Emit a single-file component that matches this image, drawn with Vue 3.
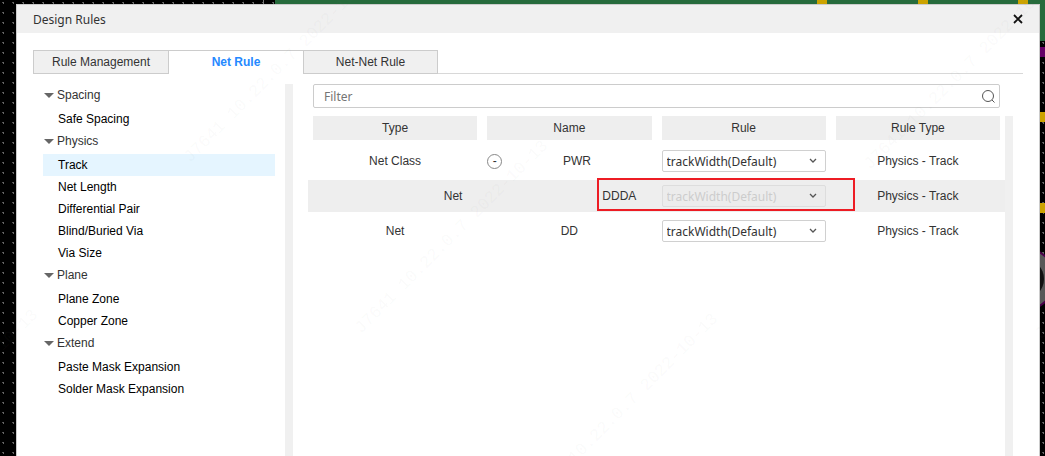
<script setup>
import { ref } from 'vue'

const tabs = ['Rule Management', 'Net Rule', 'Net-Net Rule']
const activeTab = ref('Net Rule')
const filter = ref('')
const selected = ref('Track')

const groups = [
  { name: 'Spacing', items: ['Safe Spacing'] },
  { name: 'Physics', items: ['Track', 'Net Length', 'Differential Pair', 'Blind/Buried Via', 'Via Size'] },
  { name: 'Plane', items: ['Plane Zone', 'Copper Zone'] },
  { name: 'Extend', items: ['Paste Mask Expansion', 'Solder Mask Expansion'] },
]

const columns = ['Type', 'Name', 'Rule', 'Rule Type']
const rows = [
  { type: 'Net Class', name: 'PWR', expandable: true },
  { type: 'Net', name: 'DDDA', nested: true },
  { type: 'Net', name: 'DD' },
]

const stamp = 'J7641 10.22.0.7 2022-10-13'
const stamps = [[190, 163], [361, 334], [531, 507], [870, 170], [1041, 340], [-149, 503]]
</script>

<template>
  <div class="screen">
    <svg class="board" aria-hidden="true">
      <defs>
        <pattern id="grid" width="10" height="10" patternUnits="userSpaceOnUse">
          <rect width="10" height="10" fill="#000" />
          <rect x="2" y="2" width="2" height="1" fill="#555" />
          <rect x="3" y="2" width="1" height="2" fill="#666" />
        </pattern>
      </defs>
      <rect width="100%" height="100%" fill="url(#grid)" />
      <rect x="263" width="1" height="4" fill="#777" />
      <rect x="275" width="100%" height="41" fill="#266b3c" />
      <svg x="100%" overflow="visible">
        <rect x="-228" width="10" height="4" fill="#cca300" />
        <rect x="-127" width="10" height="4" fill="#cca300" />
        <rect x="-27" width="10" height="4" fill="#cca300" />
        <rect x="-5" y="47" width="5" height="10" fill="#660066" />
        <rect x="-5" y="112" width="5" height="10" fill="#cca300" />
        <rect x="-5" y="203" width="5" height="10" fill="#cca300" />
        <circle cx="-21" cy="279" r="31" fill="#585858" stroke="#4a004a" stroke-width="2" />
        <circle cx="-21" cy="279" r="20" fill="#111" />
      </svg>
    </svg>

    <section class="dialog" role="dialog" aria-labelledby="title">
      <header class="titlebar">
        <h1 id="title">Design Rules</h1>
        <button class="close" type="button" aria-label="Close">
          <svg width="10" height="10" viewBox="0 0 10 10"><path d="M1 1l8 8M9 1L1 9" stroke="#111" stroke-width="1.8" fill="none" /></svg>
        </button>
      </header>

      <nav class="tabs" role="tablist">
        <button
          v-for="t in tabs" :key="t" type="button" role="tab" class="tab"
          :class="{ active: t === activeTab }" :aria-selected="t === activeTab"
          @click="activeTab = t"
        >{{ t }}</button>
        <span class="tabline"></span>
      </nav>

      <div class="body">
        <aside class="side">
          <div class="tree">
            <div v-for="g in groups" :key="g.name" class="group">
              <button type="button" class="group-name">
                <svg width="10" height="5" viewBox="0 0 10 5"><path d="M0 0h10L5 5z" fill="#666" /></svg>
                {{ g.name }}
              </button>
              <button
                v-for="i in g.items" :key="i" type="button" class="leaf"
                :class="{ selected: i === selected }" @click="selected = i"
              >{{ i }}</button>
            </div>
          </div>
          <div class="track"></div>
        </aside>

        <main class="main">
          <label class="filter">
            <input v-model="filter" type="text" placeholder="Filter" aria-label="Filter">
            <svg width="14" height="14" viewBox="0 0 14 14"><circle cx="7" cy="7" r="5.5" fill="none" stroke="#555" /><path d="M11 11l2.5 2.5" fill="none" stroke="#555" /></svg>
          </label>
          <div class="list">
            <div class="rules">
              <table>
                <thead>
                  <tr><th v-for="c in columns" :key="c" scope="col"><div>{{ c }}</div></th></tr>
                </thead>
                <tbody>
                  <tr v-for="r in rows" :key="r.name" :class="{ nested: r.nested }">
                    <td class="type">{{ r.type }}</td>
                    <td class="name">
                      <div class="name-line">
                        <button v-if="r.expandable" type="button" class="toggle" aria-label="Collapse">-</button>
                        <span>{{ r.name }}</span>
                      </div>
                      <div v-if="r.nested" class="marker"></div>
                    </td>
                    <td>
                      <div class="pick">
                        <select :disabled="r.nested" :aria-label="'Rule for ' + r.name">
                          <option>trackWidth(Default)</option>
                        </select>
                        <svg width="8" height="6" viewBox="0 0 8 6"><path d="M1 1l3 3 3-3" fill="none" stroke="#555" stroke-width="1.3" /></svg>
                      </div>
                    </td>
                    <td>Physics - Track</td>
                  </tr>
                </tbody>
              </table>
            </div>
            <div class="track"></div>
          </div>
        </main>
      </div>
    </section>

    <svg class="stamps" aria-hidden="true">
      <text v-for="(s, n) in stamps" :key="n" :transform="`translate(${s[0]} ${s[1]}) rotate(-45)`">{{ stamp }}</text>
    </svg>
  </div>
</template>

<style>
body { margin: 0; }
</style>

<style scoped>
.screen {
  position: relative;
  display: flex;
  height: 100vh;
  overflow: hidden;
  font: 12px/22px "Liberation Sans", Arial, sans-serif;
  color: #333;
}
.board, .stamps { position: absolute; inset: 0; width: 100%; height: 100%; }
.stamps { pointer-events: none; }
.stamps text {
  font: 17px "Liberation Mono", monospace;
  fill: #808080;
  fill-opacity: 0.05;
}
button { padding: 0; border: 0; background: none; font: inherit; color: inherit; }
.dialog {
  position: relative;
  flex: 1;
  display: flex;
  flex-direction: column;
  margin: 4px 5px 0 16px;
  border: 1px solid #ccc;
  border-bottom: 0;
  background: #fff;
}
.titlebar {
  display: flex;
  align-items: center;
  justify-content: space-between;
  height: 28px;
  padding: 0 16px;
  background: #f0f0f0;
}
h1 { margin: 0; padding-top: 2px; font: 12px/26px "Noto Sans", sans-serif; }
.close { display: flex; }
.tabs { display: flex; margin: 17px 16px 0; }
.tab {
  box-sizing: border-box;
  width: 135px;
  height: 24px;
  border: solid #ccc;
  border-width: 1px;
  background: #f0f0f0;
}
.tab:first-child { width: 136px; }
.tab.active {
  width: 134px;
  border-width: 1px 0;
  border-bottom-color: #fff;
  background: #fff;
  color: #2589ff;
  font-weight: bold;
}
.tabline { flex: 1; border-bottom: 1px solid #d8d8d8; }
.body { flex: 1; display: flex; margin: 10px 26px 0 16px; }
.side { display: flex; gap: 10px; width: 250px; padding-left: 10px; }
.tree { flex: 1; }
.track { width: 8px; background: #f0f0f0; }
.group-name {
  display: flex;
  align-items: center;
  gap: 3px;
  width: 100%;
  height: 22px;
  margin-bottom: 2px;
  padding-left: 1px;
}
.leaf { display: block; width: 100%; height: 22px; padding-left: 15px; text-align: left; color: #000; }
.leaf.selected { background: #e5f5ff; }
.main { flex: 1; display: flex; flex-direction: column; margin-left: 15px; }
.filter {
  display: flex;
  align-items: center;
  box-sizing: border-box;
  height: 24px;
  margin: 0 13px 0 5px;
  padding: 0 4px 0 10px;
  border: 1px solid #ccc;
  border-radius: 2px;
}
.filter input {
  flex: 1;
  padding: 2px 0 0;
  border: 0;
  outline: 0;
  background: none;
  font: 12px/20px "Noto Sans", sans-serif;
}
.filter input::placeholder { color: #757575; }
.list { flex: 1; display: flex; margin-top: 8px; }
.rules { flex: 1; }
table {
  width: 100%;
  table-layout: fixed;
  border-spacing: 0 3px;
  margin-top: -3px;
}
th { height: 26px; padding: 0 5px; font-weight: normal; vertical-align: top; }
th div { line-height: 24px; background: #eee; }
td { height: 32px; padding: 0 5px; text-align: center; }
.nested td { background: #eee; }
.nested .type { padding-left: 121px; }
.name { position: relative; }
.name-line { display: flex; align-items: center; }
.name-line span { flex: 1; }
.nested .name-line { padding-left: 100px; }
.toggle {
  box-sizing: border-box;
  width: 15px;
  height: 15px;
  border: 1px solid #888;
  border-radius: 50%;
  line-height: 13px;
}
.marker {
  position: absolute;
  z-index: 1;
  top: -2px;
  left: 66%;
  width: 148%;
  height: 33px;
  box-sizing: border-box;
  border: 2px solid #ed1c24;
  pointer-events: none;
}
.pick { display: grid; align-items: center; }
.pick > * { grid-area: 1 / 1; }
.pick svg { justify-self: end; margin-right: 9px; pointer-events: none; }
select {
  appearance: none;
  box-sizing: border-box;
  width: 100%;
  height: 22px;
  padding: 2px 20px 0 4px;
  border: 1px solid #d0d0d0;
  border-radius: 2px;
  background: #fff;
  font: 12px/18px "Noto Sans", sans-serif;
  color: #333;
}
select:disabled { background: #ececec; border-color: #ddd; color: #ccc; opacity: 1; }
</style>
